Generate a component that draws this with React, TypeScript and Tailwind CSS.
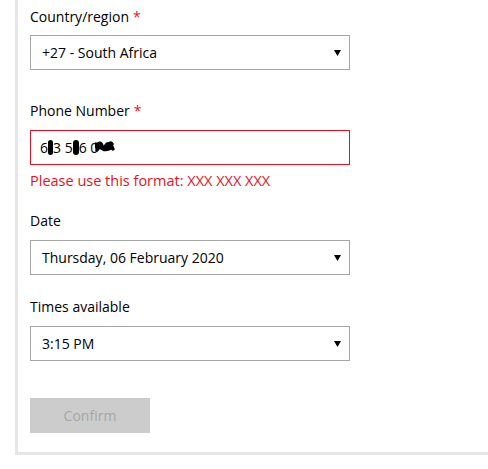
import * as React from "react";

const FONT = { fontFamily: '"Open Sans", "Noto Sans", sans-serif' };

function Caret() {
  return (
    <svg width="7" height="6" viewBox="0 0 7 6" className="shrink-0">
      <path d="M0 0h7L3.5 6z" fill="#000" />
    </svg>
  );
}

function SelectBox({ value }: { value: string }) {
  return (
    <div className="flex h-[35px] w-[320px] items-center justify-between border border-[#a6a6a6] bg-white pl-[11px] pr-[8px] text-[14px] text-black">
      <span>{value}</span>
      <Caret />
    </div>
  );
}

function Label({ text, required }: { text: string; required?: boolean }) {
  return (
    <p className="h-[20px] text-[14px] leading-[20px] text-black">
      {text}
      {required && <span className="ml-[4px] text-[#e81123]">*</span>}
    </p>
  );
}

function Blot({ w = 5 }: { w?: number }) {
  return (
    <span
      className="inline-block h-[15px] rounded-full bg-black align-middle"
      style={{ width: w }}
    />
  );
}

export default function App() {
  return (
    <div className="h-[469px] w-[488px] overflow-hidden bg-white" style={FONT}>
      <div className="ml-[15px] h-[455px] border-b-[3px] border-l-[3px] border-[#e6e6e6] pl-[12px] pt-[7px]">
        <Label text="Country/region" required />
        <div className="mt-[8px]">
          <SelectBox value="+27 - South Africa" />
        </div>

        <div className="mt-[31px]">
          <Label text="Phone Number" required />
        </div>
        <div className="mt-[9px] flex h-[35px] w-[320px] items-center border border-[#e81123] bg-white pl-[9px] text-[14px] text-black">
          <span>6</span>
          <Blot />
          <span>3 5</span>
          <Blot w={6} />
          <span>6 0</span>
          <svg width="20" height="13" viewBox="0 0 20 13" className="-ml-[3px]">
            <path
              d="M1 6c2-5 5-5 6-1s3 5 5 1 4-5 5-3M2 9c3-6 6 1 8-3s4-4 6 0M1 3c4 3 7 8 15 4M12 3c3 0 5 2 6 5"
              stroke="#000"
              strokeWidth="3.4"
              strokeLinecap="round"
              fill="none"
            />
          </svg>
        </div>
        <p className="mt-[6px] h-[20px] text-[14.5px] leading-[20px] text-[#e81123]">
          Please use this format: XXX XXX XXX
        </p>

        <div className="mt-[20px]">
          <Label text="Date" />
        </div>
        <div className="mt-[9px]">
          <SelectBox value="Thursday, 06 February 2020" />
        </div>

        <div className="mt-[22px]">
          <Label text="Times available" />
        </div>
        <div className="mt-[9px]">
          <SelectBox value="3:15 PM" />
        </div>

        <button
          type="button"
          disabled
          className="mt-[37px] h-[35px] w-[120px] bg-[#cccccc] text-[14px] text-[#a6a6a6]"
        >
          Confirm
        </button>
      </div>
    </div>
  );
}
